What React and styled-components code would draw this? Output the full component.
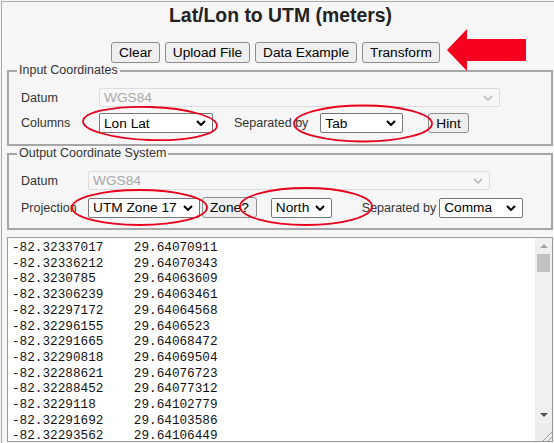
import React from "react";
import styled, { createGlobalStyle } from "styled-components";

const GlobalStyle = createGlobalStyle`
  html, body {
    margin: 0;
    padding: 0;
    background: #f6f6f6;
    font-family: "Liberation Sans", Arial, sans-serif;
    overflow: hidden;
  }
`;

const rows = [
  ["-82.32337017", "29.64070911"],
  ["-82.32336212", "29.64070343"],
  ["-82.3230785", "29.64063609"],
  ["-82.32306239", "29.64063461"],
  ["-82.32297172", "29.64064568"],
  ["-82.32296155", "29.6406523"],
  ["-82.32291665", "29.64068472"],
  ["-82.32290818", "29.64069504"],
  ["-82.32288621", "29.64076723"],
  ["-82.32288452", "29.64077312"],
  ["-82.3229118", "29.64102779"],
  ["-82.32291692", "29.64103586"],
  ["-82.32293562", "29.64106449"],
];

const Chevron = ({ color = "#000", width = 2 }) => (
  <svg width="10" height="6" viewBox="0 0 10 6">
    <path d="M1 1 L5 5 L9 1" fill="none" stroke={color} strokeWidth={width} />
  </svg>
);

const Select = ({ value, w, ml, h = 20, disabled }) => (
  <SelectBox $w={w} $ml={ml} $h={h} $disabled={disabled}>
    <span>{value}</span>
    <Chevron color={disabled ? "#b4b4b4" : "#000"} width={disabled ? 1.5 : 2} />
  </SelectBox>
);

const Annotations = () => (
  <Overlay width="554" height="443" viewBox="0 0 554 443">
    <g fill="none" stroke="#e8001c" strokeWidth="1.8">
      <ellipse cx="150" cy="123.5" rx="67" ry="16.5" transform="rotate(2 150 123.5)" />
      <ellipse cx="363" cy="123.5" rx="69" ry="18" />
      <ellipse cx="139.5" cy="207.5" rx="67.5" ry="17.5" />
      <ellipse cx="306" cy="206.5" rx="66" ry="18.5" />
    </g>
    <polygon
      points="447,50 467,29 467,39 526,39 526,61 467,61 467,71"
      fill="#f5001e"
    />
  </Overlay>
);

const App = () => {
  return (
    <Root>
      <GlobalStyle />
      <Page>
        <Title>Lat/Lon to UTM (meters)</Title>
        <ButtonRow>
          <Button>Clear</Button>
          <Button>Upload File</Button>
          <Button>Data Example</Button>
          <Button>Transform</Button>
        </ButtonRow>

        <Fieldset>
          <Legend>Input Coordinates</Legend>
          <Rows $pb={11}>
            <Row $h={19}>
              <Label $w={78}>Datum</Label>
              <Select value="WGS84" w={401} h={19} disabled />
            </Row>
            <Row $h={20} $mt={6}>
              <Label $w={78}>Columns</Label>
              <Select value="Lon Lat" w={114} />
              <Label $ml={21}>Separated by</Label>
              <Select value="Tab" w={83} ml={12} />
              <Button $ml={25} $h={20}>Hint</Button>
            </Row>
          </Rows>
        </Fieldset>

        <Fieldset>
          <Legend>Output Coordinate System</Legend>
          <Rows $pb={10}>
            <Row $h={19}>
              <Label $w={67}>Datum</Label>
              <Select value="WGS84" w={402} h={19} disabled />
            </Row>
            <Row $h={21} $mt={7}>
              <Label $w={67}>Projection</Label>
              <Select value="UTM Zone 17" w={112} />
              <Button $ml={2}>Zone?</Button>
              <Select value="North" w={61} ml={14} />
              <Label $ml={30}>Separated by</Label>
              <Select value="Comma" w={84} ml={3} />
            </Row>
          </Rows>
        </Fieldset>

        <DataBox>
          <DataText>
            {rows.map((r) => r.join("\t")).join("\n")}
          </DataText>
          <Scrollbar>
            <ScrollButton>
              <Arrow $up $color="#a3a3a3" />
            </ScrollButton>
            <Thumb />
            <Track />
            <ScrollButton $h={17}>
              <Arrow $color="#505050" />
            </ScrollButton>
            <Corner>
              <svg width="12" height="12" viewBox="0 0 12 12">
                <path d="M3 12 L12 3 M8 12 L12 8" stroke="#a0a0a0" strokeWidth="1" />
              </svg>
            </Corner>
          </Scrollbar>
        </DataBox>
      </Page>
      <Annotations />
    </Root>
  );
};

const Root = styled.div`
  position: relative;
  width: 554px;
  height: 443px;
  overflow: hidden;
`;

const Page = styled.div`
  margin: 1px 0 0 1px;
  height: 442px;
  box-sizing: border-box;
  border-left: 1px solid #a9a9a9;
  border-top: 1px solid #a9a9a9;
  padding: 0 0 0 5px;
`;

const Title = styled.h1`
  margin: 0;
  padding: 2px 0 0 0;
  font-size: 19.4px;
  line-height: 22px;
  font-weight: 700;
  color: #222;
  text-align: center;
`;

const ButtonRow = styled.div`
  display: flex;
  justify-content: center;
  gap: 5px;
  margin-top: 16px;
  padding-right: 10px;
`;

const Button = styled.button`
  height: ${(p) => p.$h || 21}px;
  margin: 0 0 0 ${(p) => p.$ml || 0}px;
  padding: 0 7px;
  box-sizing: border-box;
  border: 1px solid #8d8d8d;
  border-radius: 3px;
  background: #efefef;
  color: #000;
  font-family: "Liberation Sans", Arial, sans-serif;
  font-size: 13.7px;
  line-height: 15px;
  white-space: nowrap;
`;

const Fieldset = styled.fieldset`
  margin: 0 1px 0 0;
  padding: 0 0 0 8px;
  border: 2px solid #a6a6a6;
  min-width: 0;
`;

const Legend = styled.legend`
  padding: 0 2px;
  font-size: 12.5px;
  line-height: 15px;
  color: #333;
`;

const Rows = styled.div`
  padding: 10px 0 ${(p) => p.$pb}px 4px;
`;

const Row = styled.div`
  display: flex;
  align-items: center;
  height: ${(p) => p.$h}px;
  margin-top: ${(p) => p.$mt || 0}px;
`;

const Label = styled.span`
  flex: none;
  width: ${(p) => (p.$w ? `${p.$w}px` : "auto")};
  margin-left: ${(p) => p.$ml || 0}px;
  font-size: 12.5px;
  color: #333;
  white-space: nowrap;
`;

const SelectBox = styled.div`
  flex: none;
  display: flex;
  align-items: center;
  justify-content: space-between;
  box-sizing: border-box;
  width: ${(p) => p.$w}px;
  height: ${(p) => p.$h}px;
  margin-left: ${(p) => p.$ml || 0}px;
  padding: 0 6px 0 4px;
  border: 1px solid ${(p) => (p.$disabled ? "#dcdcdc" : "#767676")};
  border-radius: 2px;
  background: ${(p) => (p.$disabled ? "#f7f7f7" : "#fff")};
  color: ${(p) => (p.$disabled ? "#a8a8a8" : "#000")};
  font-size: 13.7px;
  white-space: nowrap;

  svg {
    flex: none;
  }
`;

const DataBox = styled.div`
  display: flex;
  height: 205px;
  margin: 7px 1px 0 0;
  box-sizing: border-box;
  border: 1px solid #999;
  background: #fff;
  overflow: hidden;
`;

const DataText = styled.pre`
  flex: 1;
  margin: 0;
  padding: 2px 0 0 4px;
  font-family: "Liberation Mono", "DejaVu Sans Mono", monospace;
  font-size: 12.7px;
  line-height: 15.7px;
  tab-size: 8;
  color: #111;
  overflow: hidden;
`;

const Scrollbar = styled.div`
  flex: none;
  width: 17px;
  display: flex;
  flex-direction: column;
  background: #f0f0f0;
`;

const ScrollButton = styled.div`
  height: ${(p) => p.$h || 16}px;
  display: flex;
  align-items: center;
  justify-content: center;
`;

const Arrow = styled.div`
  width: 0;
  height: 0;
  border-left: 4px solid transparent;
  border-right: 4px solid transparent;
  ${(p) =>
    p.$up
      ? `border-bottom: 4px solid ${p.$color};`
      : `border-top: 4px solid ${p.$color};`}
`;

const Thumb = styled.div`
  height: 18px;
  margin: 0 2px;
  background: #c1c1c1;
`;

const Track = styled.div`
  flex: 1;
`;

const Corner = styled.div`
  height: 18px;
  display: flex;
  align-items: flex-end;
  justify-content: flex-end;
  background: #ececec;
`;

const Overlay = styled.svg`
  position: absolute;
  top: 0;
  left: 0;
  pointer-events: none;
`;

export default App;
